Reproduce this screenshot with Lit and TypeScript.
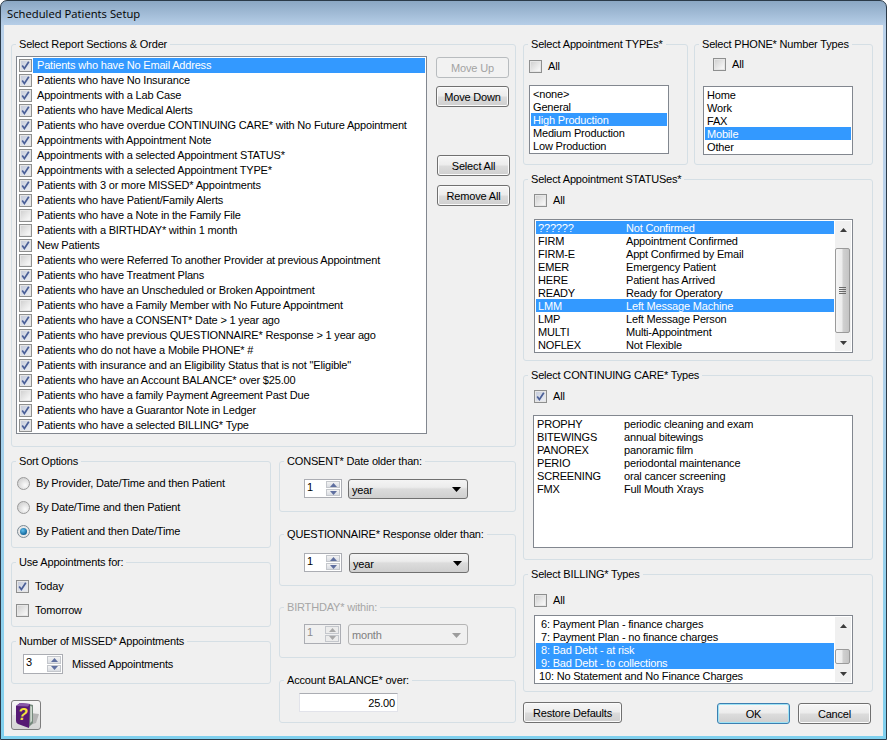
import { LitElement, html, css, svg } from "lit";
import { customElement } from "lit/decorators.js";

const SECTIONS: [string, boolean][] = [
  ["Patients who have No Email Address", true],
  ["Patients who have No Insurance", true],
  ["Appointments with a Lab Case", true],
  ["Patients who have Medical Alerts", true],
  ["Patients who have overdue CONTINUING CARE* with No Future Appointment", true],
  ["Appointments with Appointment Note", true],
  ["Appointments with a selected Appointment STATUS*", true],
  ["Appointments with a selected Appointment TYPE*", true],
  ["Patients with 3 or more MISSED* Appointments", true],
  ["Patients who have Patient/Family Alerts", true],
  ["Patients who have a Note in the Family File", false],
  ["Patients with a BIRTHDAY* within 1 month", false],
  ["New Patients", true],
  ["Patients who were Referred To another Provider at previous Appointment", false],
  ["Patients who have Treatment Plans", true],
  ["Patients who have an Unscheduled or Broken Appointment", true],
  ["Patients who have a Family Member with No Future Appointment", false],
  ["Patients who have a CONSENT* Date > 1 year ago", true],
  ["Patients who have previous QUESTIONNAIRE* Response > 1 year ago", true],
  ["Patients who do not have a Mobile PHONE* #", true],
  ['Patients with insurance and an Eligibility Status that is not "Eligible"', true],
  ["Patients who have an Account BALANCE* over $25.00", true],
  ["Patients who have a family Payment Agreement Past Due", false],
  ["Patients who have a Guarantor Note in Ledger", true],
  ["Patients who have a selected BILLING* Type", true],
];

const STATUSES = [
  ["??????", "Not Confirmed", 1],
  ["FIRM", "Appointment Confirmed"],
  ["FIRM-E", "Appt Confirmed by Email"],
  ["EMER", "Emergency Patient"],
  ["HERE", "Patient has Arrived"],
  ["READY", "Ready for Operatory"],
  ["LMM", "Left Message Machine", 1],
  ["LMP", "Left Message Person"],
  ["MULTI", "Multi-Appointment"],
  ["NOFLEX", "Not Flexible"],
];

const CARE = [
  ["PROPHY", "periodic cleaning and exam"],
  ["BITEWINGS", "annual bitewings"],
  ["PANOREX", "panoramic film"],
  ["PERIO", "periodontal maintenance"],
  ["SCREENING", "oral cancer screening"],
  ["FMX", "Full Mouth Xrays"],
];

@customElement("app-root")
export class AppRoot extends LitElement {
  static styles = css`
    :host {
      display: block;
      width: 887px;
      height: 740px;
      overflow: hidden;
      font: 11px/14px "Liberation Sans", Arial, sans-serif;
      letter-spacing: -0.18px;
      color: #000;
    }
    * { box-sizing: border-box; }
    .window {
      width: 887px;
      height: 740px;
      display: flex;
      flex-direction: column;
      border: 1px solid #2b3a48;
      border-radius: 7px 7px 0 0;
      padding: 0 3px 3px;
      background: linear-gradient(180deg, #8ba7c3 0, #b9d1ea 26px, #b9d1ea 300px, #7fd0ee 100%);
    }
    .title {
      height: 24px;
      flex: none;
      padding-left: 3px;
      display: flex;
      align-items: center;
      font: 11.25px "Open Sans", sans-serif;
      letter-spacing: 0;
      color: #000;
    }
    .body {
      flex: 1;
      background: #f0f0f0;
      padding: 12px 0 0 7px;
      display: flex;
      gap: 7px;
    }
    .left { width: 505px; display: flex; flex-direction: column; gap: 7px; }
    .right { width: 350px; display: flex; flex-direction: column; gap: 7px; }
    .lower { display: flex; gap: 8px; }
    .lower-a { width: 260px; display: flex; flex-direction: column; gap: 7px; }
    .lower-b { width: 237px; display: flex; flex-direction: column; gap: 15px; }
    .tops { display: flex; gap: 6px; }

    fieldset {
      margin: 0;
      padding: 0 0 0 var(--pl, 0px);
      min-width: 0;
      border: 1px solid #d5dfe5;
      border-radius: 3px;
    }
    legend {
      margin-left: calc(4px - var(--pl, 0px));
      padding: 0 3px;
      height: 14px;
      line-height: 14px;
      white-space: nowrap;
    }
    .dis legend { color: #a6a6a6; }

    .g-sections { height: 410px; --pl: 4px; padding-top: 5px; display: flex; }
    .g-types { width: 165px; height: 128px; --pl: 5px; padding-top: 9px; }
    .g-phone { width: 179px; height: 128px; --pl: 8px; padding-top: 7px; }
    .g-status { height: 189px; --pl: 10px; padding-top: 8px; }
    .g-care { height: 192px; --pl: 10px; padding-top: 8px; }
    .g-billing { height: 125px; --pl: 10px; padding-top: 13px; }
    .g-sort { height: 94px; --pl: 5px; padding-top: 3px; }
    .g-use { height: 72px; --pl: 4px; padding-top: 5px; }
    .g-missed { height: 50px; --pl: 11px; padding-top: 6px; display: flex; gap: 9px; align-items: center; align-content: flex-start; }
    .g-consent { height: 58px; --pl: 24px; padding-top: 11px; display: flex; gap: 6px; align-items: flex-start; }
    .g-quest { height: 59px; --pl: 24px; padding-top: 12px; display: flex; gap: 7px; align-items: flex-start; }
    .g-bday { height: 58px; margin-top: -1px; --pl: 24px; padding-top: 10px; display: flex; gap: 7px; align-items: flex-start; }
    .g-balance { height: 50px; --pl: 19px; padding-top: 6px; }

    .check {
      width: 13px;
      height: 13px;
      flex: none;
      display: block;
      border: 1px solid #8e8f8f;
      background: #f4f4f4;
      padding: 1px;
    }
    .check i {
      display: block;
      width: 9px;
      height: 9px;
      background: linear-gradient(135deg, #d2d2d2, #f4f4f4 85%);
      box-shadow: 0 0 0 1px #e6e6e6;
    }
    .check svg { display: block; width: 9px; height: 9px; }
    .check.on i { background: linear-gradient(135deg, #c6ccdb, #e6e9f0 85%); }

    .cbline { display: flex; align-items: center; gap: 6px; height: 13px; }
    .cbline span:last-child { margin-top: -1px; }
    .phone-all { margin-left: 10px; }
    .mt-12 { margin-top: 12px; }
    .mt-15 { margin-top: 15px; }
    .mt-8 { margin-top: 8px; }
    .ml-n1 { margin-left: -1px; }

    .opt { height: 24px; display: flex; align-items: center; gap: 6px; white-space: nowrap; }
    .radio {
      width: 13px;
      height: 13px;
      border-radius: 50%;
      border: 1px solid #9a9a9a;
      background: radial-gradient(circle at 65% 65%, #fbfbfb, #d0d0d0 80%);
      flex: none;
      display: flex;
      align-items: center;
      justify-content: center;
    }
    .radio.on { background: #e8e8e8; border-color: #7c8a94; }
    .radio.on b {
      width: 7px;
      height: 7px;
      border-radius: 50%;
      background: radial-gradient(circle at 40% 35%, #5fc0ee, #0d5f95 75%);
    }

    .list {
      background: #fff;
      border: 1px solid #82878f;
      padding: 1px 1px 0;
      display: flex;
    }
    .rows { flex: 1; min-width: 0; }
    .row { height: 13px; line-height: 14px; padding-left: 2px; white-space: nowrap; display: flex; }
    .row.sel { background: #3399ff; color: #fff; }
    .row .k { flex: none; }
    .row.pad5 { padding-left: 5px; }
    .row.pad3 { padding-left: 3px; }

    .l-sections { width: 411px; height: 378px; display: block; }
    .srow { height: 15px; display: flex; align-items: center; padding-left: 1px; white-space: nowrap; }
    .srow .t { flex: 1; height: 15px; line-height: 15px; padding-left: 4px; margin-left: 1px; }
    .srow.sel .t { background: #3399ff; color: #fff; }

    .l-types { width: 140px; height: 69px; }
    .l-phone { width: 150px; height: 69px; }
    .l-status { width: 319px; height: 134px; }
    .l-care { width: 320px; height: 133px; }
    .l-billing { width: 319px; height: 69px; }
    .l-status .k { width: 88px; }
    .l-care .k { width: 87px; }

    .sb { width: 16px; flex: none; margin-left: 1px; margin-bottom: 1px; display: flex; flex-direction: column; background: #f0f0f0; }
    .sb-btn { height: 17px; flex: none; display: flex; align-items: center; justify-content: center; }
    .sb-btn svg { display: block; }
    .sb-track { flex: 1; min-height: 0; }
    .thumb {
      width: 15px;
      border: 1px solid #9a9a9a;
      border-radius: 2px;
      background: linear-gradient(90deg, #f5f5f5 0, #ececec 45%, #d0d0d0 55%, #c4c4c4 100%);
      display: flex;
      align-items: center;
      justify-content: center;
    }

    .btnw {
      display: flex;
      flex-direction: column;
      margin-left: 9px;
      padding-top: 1px;
    }
    .btn {
      width: 73px;
      height: 21px;
      border: 1px solid #707070;
      border-radius: 3px;
      display: flex;
      align-items: center;
      justify-content: center;
      white-space: nowrap;
      background: linear-gradient(180deg, #f6f6f6 0, #ececec 48%, #dcdcdc 52%, #cfcfcf 100%);
      box-shadow: inset 0 0 0 1px #fbfbfb;
    }
    .btn.off {
      color: #a3a3a3;
      border-color: #b8bcbf;
      background: #f2f2f2;
      box-shadow: none;
    }
    .mt-8b { margin-top: 8px; }
    .s1 { margin-left: 1px; margin-top: 48px; }
    .s2 { margin-left: 1px; margin-top: 9px; }
    .btn.def { border-color: #3c7fb1; box-shadow: inset 0 0 0 1px #9fe3f5; }

    .help {
      width: 30px;
      height: 30px;
      margin-top: 9px;
      border: 1px solid #7d7d7d;
      border-radius: 3px;
      background: linear-gradient(180deg, #f6f6f6 0, #ececec 48%, #e2e2e2 52%, #d6d6d6 100%);
      display: flex;
      align-items: center;
      justify-content: center;
    }

    .spin {
      flex: none;
      height: 19px;
      width: 38px;
      background: #fff;
      border: 1px solid #abadb3;
      display: flex;
      padding-left: 2px;
      line-height: 15px;
    }
    .spin .v { flex: 1; }
    .spin .bs { width: 15px; display: flex; flex-direction: column; gap: 1px; padding: 1px 1px 1px 0; }
    .spin .bs span {
      flex: 1;
      background: linear-gradient(180deg, #f3f3f3, #dadde3);
      border: 1px solid #c4c7cc;
      display: flex;
      align-items: center;
      justify-content: center;
    }
    .spin.w40 { width: 40px; height: 20px; }
    .spin.w37 { width: 37px; height: 20px; color: #8c8c8c; background: #f0f0f0; }
    .spin.w37 .bs span { background: #ececec; }

    .combo {
      flex: none;
      width: 120px;
      height: 20px;
      border: 1px solid #707070;
      border-radius: 3px;
      display: flex;
      align-items: center;
      justify-content: space-between;
      padding: 1px 6px 0 3px;
      background: linear-gradient(180deg, #f4f4f4 0, #ececec 40%, #dcdcdc 50%, #cfcfcf 100%);
    }
    .combo.dis-c {
      height: 21px;
      border-color: #b5b5b5;
      color: #7f7f7f;
      background: #f0f0f0;
    }

    .num {
      width: 99px;
      height: 19px;
      background: #fff;
      border: 1px solid #e2e3ea;
      border-top-color: #abadb3;
      text-align: right;
      padding-right: 2px;
      line-height: 18px;
    }

    .foot { display: flex; margin-top: 3px; align-items: flex-start; }
    .b-restore { width: 99px; }
    .b-ok { margin-left: 95px; margin-top: 1px; }
    .b-cancel { margin-left: 8px; margin-top: 1px; }
  `;

  private cb(on: boolean) {
    return html`<span class="check ${on ? "on" : ""}"><i>${on
      ? html`<svg viewBox="0 0 9 9"><path d="M1.2 4.4 L3.4 7.4 L7.8 0.8" fill="none" stroke="#4a5f97" stroke-width="1.7"/></svg>`
      : ""}</i></span>`;
  }

  private cbAll(on: boolean, cls = "") {
    return html`<div class="cbline ${cls}">${this.cb(on)}<span>All</span></div>`;
  }

  private arrow(up: boolean, fill = "#3c3c3c") {
    return html`<svg width="7" height="4" viewBox="0 0 7 4">
      ${svg`<path d=${up ? "M0 4 L3.5 0 L7 4 Z" : "M0 0 L7 0 L3.5 4 Z"} fill=${fill}/>`}
    </svg>`;
  }

  private scrollbar(top: number, h: number) {
    return html`<div class="sb">
      <div class="sb-btn">${this.arrow(true)}</div>
      <div class="sb-track">
        <div class="thumb" style="margin-top:${top}px;height:${h}px">
          ${h > 30
            ? html`<svg width="7" height="7" viewBox="0 0 7 7"><path d="M0 .5H7M0 2.5H7M0 4.5H7M0 6.5H7" stroke="#6a6a6a" stroke-width="1"/></svg>`
            : ""}
        </div>
      </div>
      <div class="sb-btn">${this.arrow(false)}</div>
    </div>`;
  }

  private simple(items: string[], sel: string[]) {
    return items.map(
      (t) => html`<div class="row ${sel.includes(t) ? "sel" : ""}">${t}</div>`
    );
  }

  private spin(value: string, cls = "", fill = "#5f6f9f") {
    return html`<div class="spin ${cls}">
      <span class="v">${value}</span>
      <div class="bs"><span>${this.arrow(true, fill)}</span><span>${this.arrow(false, fill)}</span></div>
    </div>`;
  }

  private combo(v: string, disabled = false) {
    return html`<div class="combo ${disabled ? "dis-c" : ""}">
      <span>${v}</span>
      <svg width="9" height="5" viewBox="0 0 9 5"><path d="M0 0 H9 L4.5 5 Z" fill=${disabled ? "#9c9c9c" : "#000"}/></svg>
    </div>`;
  }

  render() {
    return html`<div class="window">
      <div class="title">Scheduled Patients Setup</div>
      <div class="body">
        <div class="left">
          <fieldset class="g-sections">
            <legend>Select Report Sections &amp; Order</legend>
            <div class="list l-sections">
              ${SECTIONS.map(
                ([t, on], i) => html`<div class="srow ${i === 0 ? "sel" : ""}">${this.cb(on)}<span class="t">${t}</span></div>`
              )}
            </div>
            <div class="btnw">
              <div class="btn off">Move Up</div>
              <div class="btn mt-8b">Move Down</div>
              <div class="btn s1">Select All</div>
              <div class="btn s2">Remove All</div>
            </div>
          </fieldset>
          <div class="lower">
            <div class="lower-a">
              <fieldset class="g-sort">
                <legend>Sort Options</legend>
                <div class="opt"><span class="radio"></span>By Provider, Date/Time and then Patient</div>
                <div class="opt"><span class="radio"></span>By Date/Time and then Patient</div>
                <div class="opt"><span class="radio on"><b></b></span>By Patient and then Date/Time</div>
              </fieldset>
              <fieldset class="g-use">
                <legend>Use Appointments for:</legend>
                <div class="opt">${this.cb(true)}Today</div>
                <div class="opt">${this.cb(false)}Tomorrow</div>
              </fieldset>
              <fieldset class="g-missed">
                <legend>Number of MISSED* Appointments</legend>
                ${this.spin("3", "w40")}<span>Missed Appointments</span>
              </fieldset>
              <div class="help">
                <svg width="26" height="28" viewBox="0 0 26 28">
                  <path d="M17 12 L26 13 L23 22 L17 24 Z" fill="#b4b4b4"/>
                  <path d="M16 3 L20 4 L20 22 L16 26 Z" fill="#74897c"/>
                  <path d="M17.4 5 L18.8 5.4 L18.8 20 L17.4 22 Z" fill="#e3ece3"/>
                  <path d="M3 5 L7 2 L17 3 L16 27 L5 23 Q3 22 3 20 Z" fill="#561a74"/>
                  <path d="M3 5 L7 2 L17 3 L15 5.5 Z" fill="#8a5aa8"/>
                  <text x="5" y="19" font-family="Liberation Sans" font-weight="700" font-style="italic" font-size="16" fill="#f6e43a">?</text>
                </svg>
              </div>
            </div>
            <div class="lower-b">
              <fieldset class="g-consent">
                <legend>CONSENT* Date older than:</legend>
                ${this.spin("1")}${this.combo("year")}
              </fieldset>
              <fieldset class="g-quest">
                <legend>QUESTIONNAIRE* Response older than:</legend>
                ${this.spin("1")}${this.combo("year")}
              </fieldset>
              <fieldset class="g-bday dis">
                <legend>BIRTHDAY* within:</legend>
                ${this.spin("1", "w37", "#a8a8a8")}${this.combo("month", true)}
              </fieldset>
              <fieldset class="g-balance">
                <legend>Account BALANCE* over:</legend>
                <div class="num">25.00</div>
              </fieldset>
            </div>
          </div>
        </div>
        <div class="right">
          <div class="tops">
            <fieldset class="g-types">
              <legend>Select Appointment TYPEs*</legend>
              ${this.cbAll(false)}
              <div class="list l-types mt-12"><div class="rows">
                ${this.simple(["<none>", "General", "High Production", "Medium Production", "Low Production"], ["High Production"])}
              </div></div>
            </fieldset>
            <fieldset class="g-phone">
              <legend>Select PHONE* Number Types</legend>
              ${this.cbAll(false, "phone-all")}
              <div class="list l-phone mt-15"><div class="rows">
                ${this.simple(["Home", "Work", "FAX", "Mobile", "Other"], ["Mobile"])}
              </div></div>
            </fieldset>
          </div>
          <fieldset class="g-status">
            <legend>Select Appointment STATUSes*</legend>
            ${this.cbAll(false)}
            <div class="list l-status mt-12">
              <div class="rows">
                ${STATUSES.map(
                  ([k, v, s]) => html`<div class="row ${s ? "sel" : ""}"><span class="k">${k}</span><span>${v}</span></div>`
                )}
              </div>
              ${this.scrollbar(10, 85)}
            </div>
          </fieldset>
          <fieldset class="g-care">
            <legend>Select CONTINUING CARE* Types</legend>
            ${this.cbAll(true)}
            <div class="list l-care mt-12 ml-n1">
              <div class="rows">
                ${CARE.map(([k, v]) => html`<div class="row"><span class="k">${k}</span><span>${v}</span></div>`)}
              </div>
            </div>
          </fieldset>
          <fieldset class="g-billing">
            <legend>Select BILLING* Types</legend>
            ${this.cbAll(false)}
            <div class="list l-billing mt-8">
              <div class="rows">
                <div class="row pad5">6: Payment Plan - finance charges</div>
                <div class="row pad5">7: Payment Plan - no finance charges</div>
                <div class="row pad5 sel">8: Bad Debt - at risk</div>
                <div class="row pad5 sel">9: Bad Debt - to collections</div>
                <div class="row pad3">10: No Statement and No Finance Charges</div>
              </div>
              ${this.scrollbar(15, 15)}
            </div>
          </fieldset>
          <div class="foot">
            <div class="btn b-restore">Restore Defaults</div>
            <div class="btn def b-ok">OK</div>
            <div class="btn b-cancel">Cancel</div>
          </div>
        </div>
      </div>
    </div>`;
  }
}
